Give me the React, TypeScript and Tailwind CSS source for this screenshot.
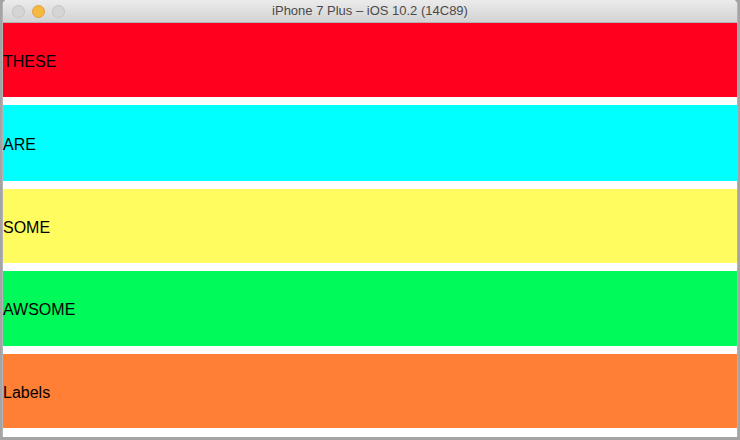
import React from 'react'

const bands = [
  { label: 'THESE', className: 'h-[74px] bg-[#ff001f]' },
  { label: 'ARE', className: 'h-[76px] bg-[#00ffff]' },
  { label: 'SOME', className: 'h-[74px] bg-[#fffc5f]' },
  { label: 'AWSOME', className: 'h-[75px] bg-[#00fa5a]' },
  { label: 'Labels', className: 'h-[74px] bg-[#ff7f34]' },
]

function TrafficLight({ active }: { active?: boolean }) {
  return (
    <div
      className={
        active
          ? 'h-[13px] w-[13px] rounded-full border border-[#dea236] bg-[#f6b93f]'
          : 'h-[13px] w-[13px] rounded-full border border-[#c4c4c4] bg-[#d6d5d6]'
      }
    />
  )
}

export default function App() {
  return (
    <div className="h-[440px] w-[740px] overflow-hidden bg-[#a4a4a4] px-[2px]" style={{ fontFamily: '"Liberation Sans", Arial, sans-serif' }}>
      <div className="flex h-[437px] flex-col overflow-hidden rounded-t-[5px] border-x border-[#b4b4b4] bg-white">
        {/* title bar */}
        <div className="relative flex h-[23px] shrink-0 items-center border-b border-[#b3b3b3] bg-gradient-to-b from-[#ebebeb] to-[#d4d3d4]">
          <div className="flex items-center gap-[7px] pl-[9px]">
            <TrafficLight />
            <TrafficLight active />
            <TrafficLight />
          </div>
          <div className="absolute inset-0 flex items-center justify-center text-[13px] text-[#4a4a4a]">
            iPhone 7 Plus – iOS 10.2 (14C89)
          </div>
        </div>

        {/* labels */}
        <div className="flex flex-col gap-[8px] pb-[9px]">
          {bands.map((band) => (
            <div key={band.label} className={`flex items-center pt-[3px] text-[16px] text-black ${band.className}`}>
              {band.label}
            </div>
          ))}
        </div>
      </div>
    </div>
  )
}
